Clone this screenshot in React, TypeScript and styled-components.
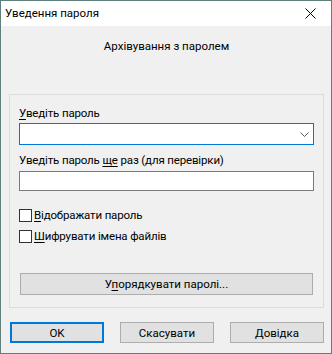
import React, { useState } from "react";
import styled, { createGlobalStyle } from "styled-components";

const GlobalStyle = createGlobalStyle`
  html, body {
    margin: 0;
    padding: 0;
    background: #ffffff;
  }
  * {
    box-sizing: border-box;
  }
`;

const Window = styled.div`
  width: 332px;
  height: 354px;
  border: 1px solid #5f7f7c;
  display: flex;
  flex-direction: column;
  font-family: Roboto, "Liberation Sans", sans-serif;
  font-size: 11.5px;
  color: #000;
`;

const TitleBar = styled.div`
  height: 25px;
  background: #ffffff;
  display: flex;
  align-items: center;
  justify-content: space-between;
  padding-left: 4px;
`;

const TitleText = styled.span`
  font-size: 11.5px;
  line-height: 16px;
  margin-top: -2px;
`;

const CloseButton = styled.div`
  width: 46px;
  height: 25px;
  display: flex;
  align-items: center;
  justify-content: center;
  padding-left: 4px;
`;

const Content = styled.div`
  flex: 1;
  background: #f0f0f0;
  display: flex;
  flex-direction: column;
  padding: 12px 7px 0 8px;
`;

const Heading = styled.div`
  text-align: center;
  line-height: 16px;
  height: 16px;
  margin-bottom: 40px;
`;

const GroupBox = styled.div`
  border: 1px solid #dcdcdc;
  height: 214px;
  padding: 10px 9px 0 9px;
  display: flex;
  flex-direction: column;
`;

const Label = styled.div<{ $gap: number }>`
  line-height: 16px;
  height: 16px;
  margin-bottom: ${(p) => p.$gap}px;
  letter-spacing: -0.15px;
`;

const Mn = styled.span`
  text-decoration: underline;
  text-underline-offset: 2px;
`;

const Combo = styled.div`
  height: 22px;
  border: 1px solid #0078d7;
  background: #ffffff;
  display: flex;
  align-items: center;
  justify-content: flex-end;
  padding-right: 4px;
  margin-bottom: 7px;
`;

const TextBox = styled.div`
  height: 20px;
  border: 1px solid #7a7a7a;
  background: #ffffff;
  margin-bottom: 16px;
`;

const CheckRow = styled.label<{ $gap: number }>`
  display: flex;
  align-items: center;
  height: 16px;
  line-height: 16px;
  margin-bottom: ${(p) => p.$gap}px;
  letter-spacing: -0.15px;
  cursor: default;
`;

const CheckBox = styled.span<{ $on: boolean }>`
  width: 13px;
  height: 13px;
  border: 1px solid #333333;
  background: #ffffff;
  margin-right: 2px;
  display: flex;
  align-items: center;
  justify-content: center;
  font-size: 10px;
`;

const Button = styled.button<{ $default?: boolean }>`
  height: 21px;
  border: ${(p) => (p.$default ? "2px solid #0078d7" : "1px solid #adadad")};
  background: #e1e1e1;
  font-family: inherit;
  font-size: 11.5px;
  color: #000;
  padding: 0;
  line-height: 16px;
  cursor: default;
`;

const WideButton = styled(Button)`
  height: 22px;
  margin: 0 1px;
`;

const ButtonRow = styled.div`
  display: flex;
  gap: 16px;
  margin-top: 14px;
  padding-left: 1px;
`;

const DialogButton = styled(Button)`
  width: 94px;
`;

const App: React.FC = () => {
  const [showPass, setShowPass] = useState(false);
  const [encrypt, setEncrypt] = useState(false);

  return (
    <>
      <GlobalStyle />
      <Window>
        <TitleBar>
          <TitleText>Уведення пароля</TitleText>
          <CloseButton>
            <svg width="11" height="11" viewBox="0 0 11 11">
              <path d="M0.5 0.5 L10.5 10.5 M10.5 0.5 L0.5 10.5" stroke="#000" strokeWidth="1" />
            </svg>
          </CloseButton>
        </TitleBar>
        <Content>
          <Heading>Архівування з паролем</Heading>
          <GroupBox>
            <Label $gap={2}>
              <Mn>У</Mn>ведіть пароль
            </Label>
            <Combo>
              <svg width="9" height="5" viewBox="0 0 9 5">
                <path d="M0.5 0.5 L4.5 4.5 L8.5 0.5" fill="none" stroke="#555" strokeWidth="1" />
              </svg>
            </Combo>
            <Label $gap={3}>
              Уведіть пароль <Mn>ще</Mn> раз (для перевірки)
            </Label>
            <TextBox />
            <CheckRow $gap={5} onClick={() => setShowPass(!showPass)}>
              <CheckBox $on={showPass}>{showPass ? "✓" : ""}</CheckBox>
              <span>
                <Mn>В</Mn>ідображати пароль
              </span>
            </CheckRow>
            <CheckRow $gap={29} onClick={() => setEncrypt(!encrypt)}>
              <CheckBox $on={encrypt}>{encrypt ? "✓" : ""}</CheckBox>
              <span>
                <Mn>Ш</Mn>ифрувати імена файлів
              </span>
            </CheckRow>
            <WideButton>
              У<Mn>п</Mn>орядкувати паролі...
            </WideButton>
          </GroupBox>
          <ButtonRow>
            <DialogButton $default>OK</DialogButton>
            <DialogButton>Скасувати</DialogButton>
            <DialogButton>Довідка</DialogButton>
          </ButtonRow>
        </Content>
      </Window>
    </>
  );
};

export default App;
